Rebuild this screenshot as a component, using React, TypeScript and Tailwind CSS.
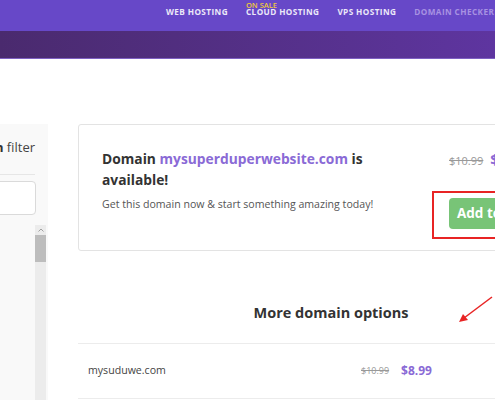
import React from "react";

const navItems = [
  { label: "WEB HOSTING" },
  { label: "CLOUD HOSTING", badge: "ON SALE" },
  { label: "VPS HOSTING" },
  { label: "DOMAIN CHECKER", faded: true },
];

function Header() {
  return (
    <div>
      <div className="h-[31px] bg-[#6748c8] flex items-start pt-[7px] pl-[166px] gap-[18px]">
        {navItems.map((item) => (
          <div key={item.label} className="relative shrink-0 text-[8.2px] leading-[10px]">
            {item.badge && (
              <span className="absolute left-0 top-[-6px] text-[7.5px] leading-[8px] font-semibold text-[#f0c83c] whitespace-nowrap">
                {item.badge}
              </span>
            )}
            <span
              className={
                item.faded
                  ? "font-bold tracking-[0.05em] whitespace-nowrap text-[#a792e2]"
                  : "font-bold tracking-[0.05em] whitespace-nowrap text-[#ece8f8]"
              }
            >
              {item.label}
            </span>
          </div>
        ))}
      </div>
      <div className="h-[28px] bg-gradient-to-r from-[#4a2a6e] to-[#5e35a0] border-b border-[#7e60c2]" />
    </div>
  );
}

function Sidebar() {
  return (
    <div className="w-[48px] shrink-0 bg-[#f9f9f9] overflow-hidden">
      <div className="flex justify-end pr-[13px] pt-[14px] whitespace-nowrap text-[13px] leading-[18px] text-[#444]">
        <span>
          <b className="text-[#333]">Extension</b> filter
        </span>
      </div>
      <div className="mr-[13px] mt-[18px] border-t border-[#e6e6e6]" />
      <div className="ml-[-10px] mr-[12px] mt-[6px] h-[34px] bg-white border border-[#dadada] rounded-[4px]" />
      <div className="flex justify-end pr-[2px] mt-[10px]">
        <div className="w-[11px] h-[200px] bg-[#ececec] flex flex-col">
          <div className="h-[10px] flex items-center justify-center">
            <svg width="6" height="4" viewBox="0 0 6 4">
              <path d="M0.5 3.5 L3 1 L5.5 3.5" fill="none" stroke="#a0a0a0" strokeWidth="1" />
            </svg>
          </div>
          <div className="h-[27px] bg-[#bdbdbd]" />
        </div>
      </div>
    </div>
  );
}

function AvailableCard() {
  return (
    <div className="h-[127px] border border-[#e3e3e3] rounded-[3px] flex">
      <div className="w-[370px] shrink-0 pl-[23px] pt-[23px]">
        <div className="w-[290px] text-[13.8px] leading-[21px] font-bold text-[#333]">
          Domain <span className="text-[#8a6ad6]">mysuperduperwebsite.com</span> is available!
        </div>
        <div className="mt-[4px] text-[10.6px] leading-[20px] text-[#555] whitespace-nowrap">
          Get this domain now &amp; start something amazing today!
        </div>
      </div>
      <div className="pt-[25px]">
        <div className="flex items-baseline whitespace-nowrap">
          <span className="text-[11px] leading-[18px] text-[#999] line-through">$10.99</span>
          <span className="ml-[7px] text-[15px] leading-[18px] font-bold text-[#8a6ad6]">$8.99</span>
        </div>
        <div className="relative mt-[28px]">
          <div className="absolute left-[-17px] top-[-7px] bottom-[-10px] w-[140px] border-2 border-[#e82424]" />
          <button className="h-[31px] px-[8px] bg-[#78c477] rounded-[4px] text-[13.5px] font-bold text-white whitespace-nowrap">
            Add to cart
          </button>
        </div>
      </div>
    </div>
  );
}

function DomainRow({ name, old, price }: { name: string; old: string; price: string }) {
  return (
    <div className="h-[55px] border-b border-[#ececec] flex items-center pl-[10px]">
      <span className="w-[273px] shrink-0 text-[10.6px] text-[#444]">{name}</span>
      <span className="text-[9px] text-[#999] line-through">{old}</span>
      <span className="ml-[12px] text-[12px] font-bold text-[#8a6ad6]">{price}</span>
    </div>
  );
}

export default function App() {
  return (
    <div
      className="relative w-[495px] h-[400px] overflow-hidden bg-white"
      style={{ fontFamily: '"Open Sans", "Liberation Sans", sans-serif' }}
    >
      <Header />
      <div className="flex h-[400px]">
        <div className="pt-[65px] flex">
          <Sidebar />
        </div>
        <div className="ml-[30px] w-[506px] shrink-0 pt-[65px]">
          <AvailableCard />
          <div className="mt-[50px] mb-[18px] text-center text-[14.5px] leading-[24px] font-bold text-[#333]">
            More domain options
          </div>
          <div className="border-t border-[#ececec]">
            <DomainRow name="mysuduwe.com" old="$10.99" price="$8.99" />
          </div>
        </div>
      </div>
      <svg className="absolute inset-0 pointer-events-none" width="495" height="400">
        <line x1="492" y1="297" x2="464" y2="318" stroke="#e82424" strokeWidth="1.5" />
        <polygon points="459,322 463,314 468,320" fill="#e82424" />
      </svg>
    </div>
  );
}
